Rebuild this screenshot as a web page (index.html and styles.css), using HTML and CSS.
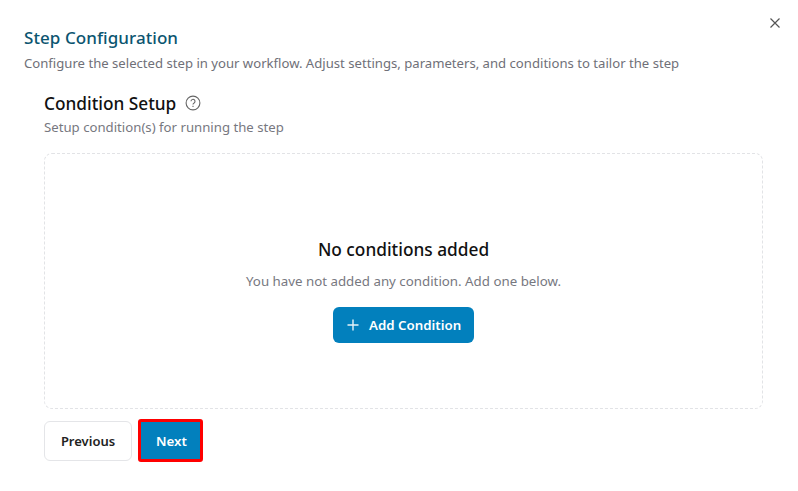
FILE: index.html
```html
<!DOCTYPE html>
<html lang="en">
<head>
    <meta charset="UTF-8">
    <meta name="viewport" content="width=device-width, initial-scale=1.0">
    <title>Step Configuration</title>
    <link rel="stylesheet" href="styles.css">
</head>
<body>
    <div class="dialog">
        <button class="close-button" aria-label="Close">
            <svg width="10" height="10" viewBox="0 0 10 10"><path d="M0.5 0.5L9.5 9.5M9.5 0.5L0.5 9.5" stroke="#555" stroke-width="1.2" fill="none"/></svg>
        </button>
        <h1 class="dialog-title">Step Configuration</h1>
        <p class="dialog-text">Configure the selected step in your workflow. Adjust settings, parameters, and conditions to tailor the step</p>
        <div class="section">
            <div class="section-head">
                <h2>Condition Setup</h2>
                <svg width="16" height="16" viewBox="0 0 16 16" fill="none" stroke="#666" stroke-width="1.1"><circle cx="8" cy="8" r="6.9"/><path d="M6 6.3a2 2 0 1 1 3.1 1.7c-.7.4-1.1.8-1.1 1.5"/><path d="M8 10.8v1.1"/></svg>
            </div>
            <p class="section-text">Setup condition(s) for running the step</p>
            <div class="empty-box">
                <h3>No conditions added</h3>
                <p>You have not added any condition. Add one below.</p>
                <button class="add-button">
                    <svg width="12" height="12" viewBox="0 0 12 12"><path d="M6 0.5V11.5M0.5 6H11.5" stroke="#e6f2f8" stroke-width="1.4" fill="none"/></svg>
                    Add Condition
                </button>
            </div>
            <div class="actions">
                <button class="prev-button">Previous</button>
                <button class="next-button">Next</button>
            </div>
        </div>
    </div>
</body>
</html>
```

FILE: styles.css
```css
body {
    font-family: "Noto Sans", "Open Sans", sans-serif;
    background-color: #fff;
    margin: 0;
    padding: 0;
}
h1, h2, h3, p {
    margin: 0;
}
button {
    font-family: inherit;
    cursor: pointer;
}
.dialog {
    position: relative;
    box-sizing: border-box;
    width: 798px;
    height: 491px;
    padding: 26px 35px 0 24px;
}
.close-button {
    position: absolute;
    top: 18px;
    right: 18px;
    display: flex;
    padding: 0;
    border: none;
    background: none;
}
.dialog-title {
    font-size: 17px;
    line-height: 24px;
    font-weight: 500;
    letter-spacing: 0.06px;
    color: #0b5570;
}
.dialog-text {
    margin-top: 3px;
    font-size: 13.14px;
    line-height: 20px;
    color: #6f7078;
}
.section {
    padding: 18px 0 0 20px;
}
.section-head {
    display: flex;
    align-items: center;
    gap: 9px;
    height: 26px;
}
.section-head h2 {
    font-size: 17.25px;
    line-height: 26px;
    font-weight: 500;
    color: #111;
}
.section-head svg {
    margin-top: -2px;
}
.section-text {
    margin-top: 1px;
    font-size: 13.2px;
    line-height: 18px;
    color: #77787f;
}
.empty-box {
    display: flex;
    flex-direction: column;
    align-items: center;
    box-sizing: border-box;
    height: 256px;
    margin-top: 17px;
    padding-top: 84px;
    border: 1px dashed #e2e3e6;
    border-radius: 8px;
}
.empty-box h3 {
    font-size: 17.3px;
    line-height: 24px;
    font-weight: 500;
    color: #111;
}
.empty-box p {
    margin-top: 9px;
    font-size: 13.3px;
    line-height: 20px;
    color: #77787f;
}
.add-button {
    display: flex;
    align-items: center;
    gap: 10px;
    width: 141px;
    height: 36px;
    margin-top: 16px;
    padding: 0 0 0 14px;
    border: none;
    border-radius: 6px;
    background-color: #0280bd;
    color: #fff;
    font-size: 13.3px;
    font-weight: 600;
}
.actions {
    display: flex;
    gap: 6px;
    margin-top: 12px;
}
.prev-button {
    width: 88px;
    height: 40px;
    border: 1px solid #e4e5e8;
    border-radius: 6px;
    background-color: #fff;
    color: #222;
    font-size: 13px;
    font-weight: 600;
}
.next-button {
    width: 65px;
    height: 43px;
    margin-top: -2px;
    padding: 0 0 0 2px;
    border: 3px solid #f00;
    border-radius: 3px;
    background-color: #0280bd;
    color: #fff;
    font-size: 13.3px;
    font-weight: 600;
}
```
